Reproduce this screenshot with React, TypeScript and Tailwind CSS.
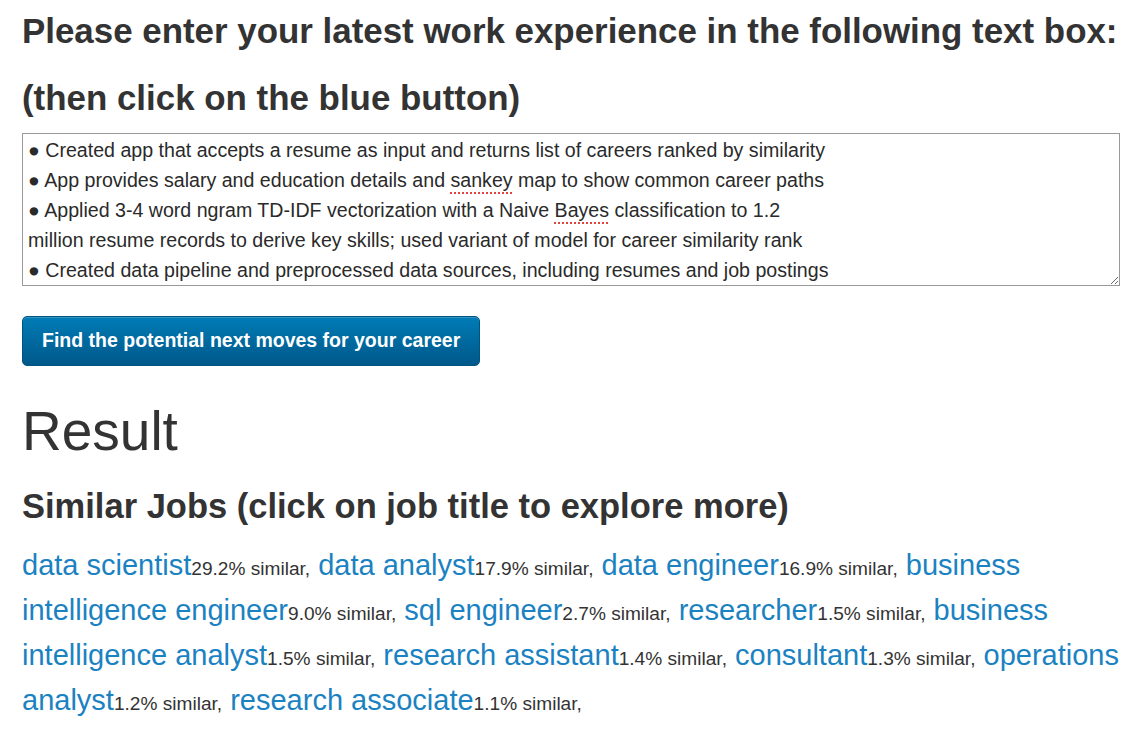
import React from "react";

const lines: React.ReactNode[] = [
  <>● Created app that accepts a resume as input and returns list of careers ranked by similarity</>,
  <>
    ● App provides salary and education details and{" "}
    <span className="underline decoration-dotted decoration-[#e0433c] decoration-2 underline-offset-[5px]">sankey</span> map to
    show common career paths
  </>,
  <>
    ● Applied 3-4 word ngram TD-IDF vectorization with a Naive{" "}
    <span className="underline decoration-dotted decoration-[#e0433c] decoration-2 underline-offset-[5px]">Bayes</span>{" "}
    classification to 1.2
  </>,
  <>million resume records to derive key skills; used variant of model for career similarity rank</>,
  <>● Created data pipeline and preprocessed data sources, including resumes and job postings</>,
];

const jobs = [
  ["data scientist", "29.2%"],
  ["data analyst", "17.9%"],
  ["data engineer", "16.9%"],
  ["business intelligence engineer", "9.0%"],
  ["sql engineer", "2.7%"],
  ["researcher", "1.5%"],
  ["business intelligence analyst", "1.5%"],
  ["research assistant", "1.4%"],
  ["consultant", "1.3%"],
  ["operations analyst", "1.2%"],
  ["research associate", "1.1%"],
];

export default function App() {
  return (
    <div className="min-h-screen bg-white pl-[22px] pr-[21px] pt-[11px] text-[#333] font-['Liberation_Sans',Arial,sans-serif]">
      <h3 className="whitespace-nowrap text-[34.9px] font-bold leading-[40px]">
        Please enter your latest work experience in the following text box:
      </h3>
      <h3 className="mt-[27px] text-[34.9px] font-bold leading-[40px]">(then click on the blue button)</h3>

      <div className="mt-[15px] h-[153px] w-full resize overflow-hidden border border-[#999] px-[5px] pt-[1px] text-[19.6px] leading-[30px] text-[#2a2a2a]">
        {lines.map((l, i) => (
          <div key={i} className="whitespace-nowrap">
            {l}
          </div>
        ))}
      </div>

      <button className="mt-[30px] block h-[50px] rounded-[5px] border border-[#005580] bg-gradient-to-b from-[#007cb6] to-[#00588a] px-[19px] text-[19.5px] font-bold text-white shadow-[inset_0_1px_0_rgba(255,255,255,0.2)]">
        Find the potential next moves for your career
      </button>

      <h1 className="mt-[35px] text-[55px] leading-[60px]">Result</h1>

      <h2 className="mt-[25px] text-[34.5px] font-bold leading-[40px]">
        Similar Jobs (click on job title to explore more)
      </h2>

      <p className="mt-[17px] text-[29px] leading-[45px]">
        {jobs.map(([title, pct]) => (
          <React.Fragment key={title}>
            <a href="#" className="text-[#1b82c2]">
              {title}
            </a>
            <span className="text-[19.1px] leading-none">{pct} similar,</span>{" "}
          </React.Fragment>
        ))}
      </p>
    </div>
  );
}
